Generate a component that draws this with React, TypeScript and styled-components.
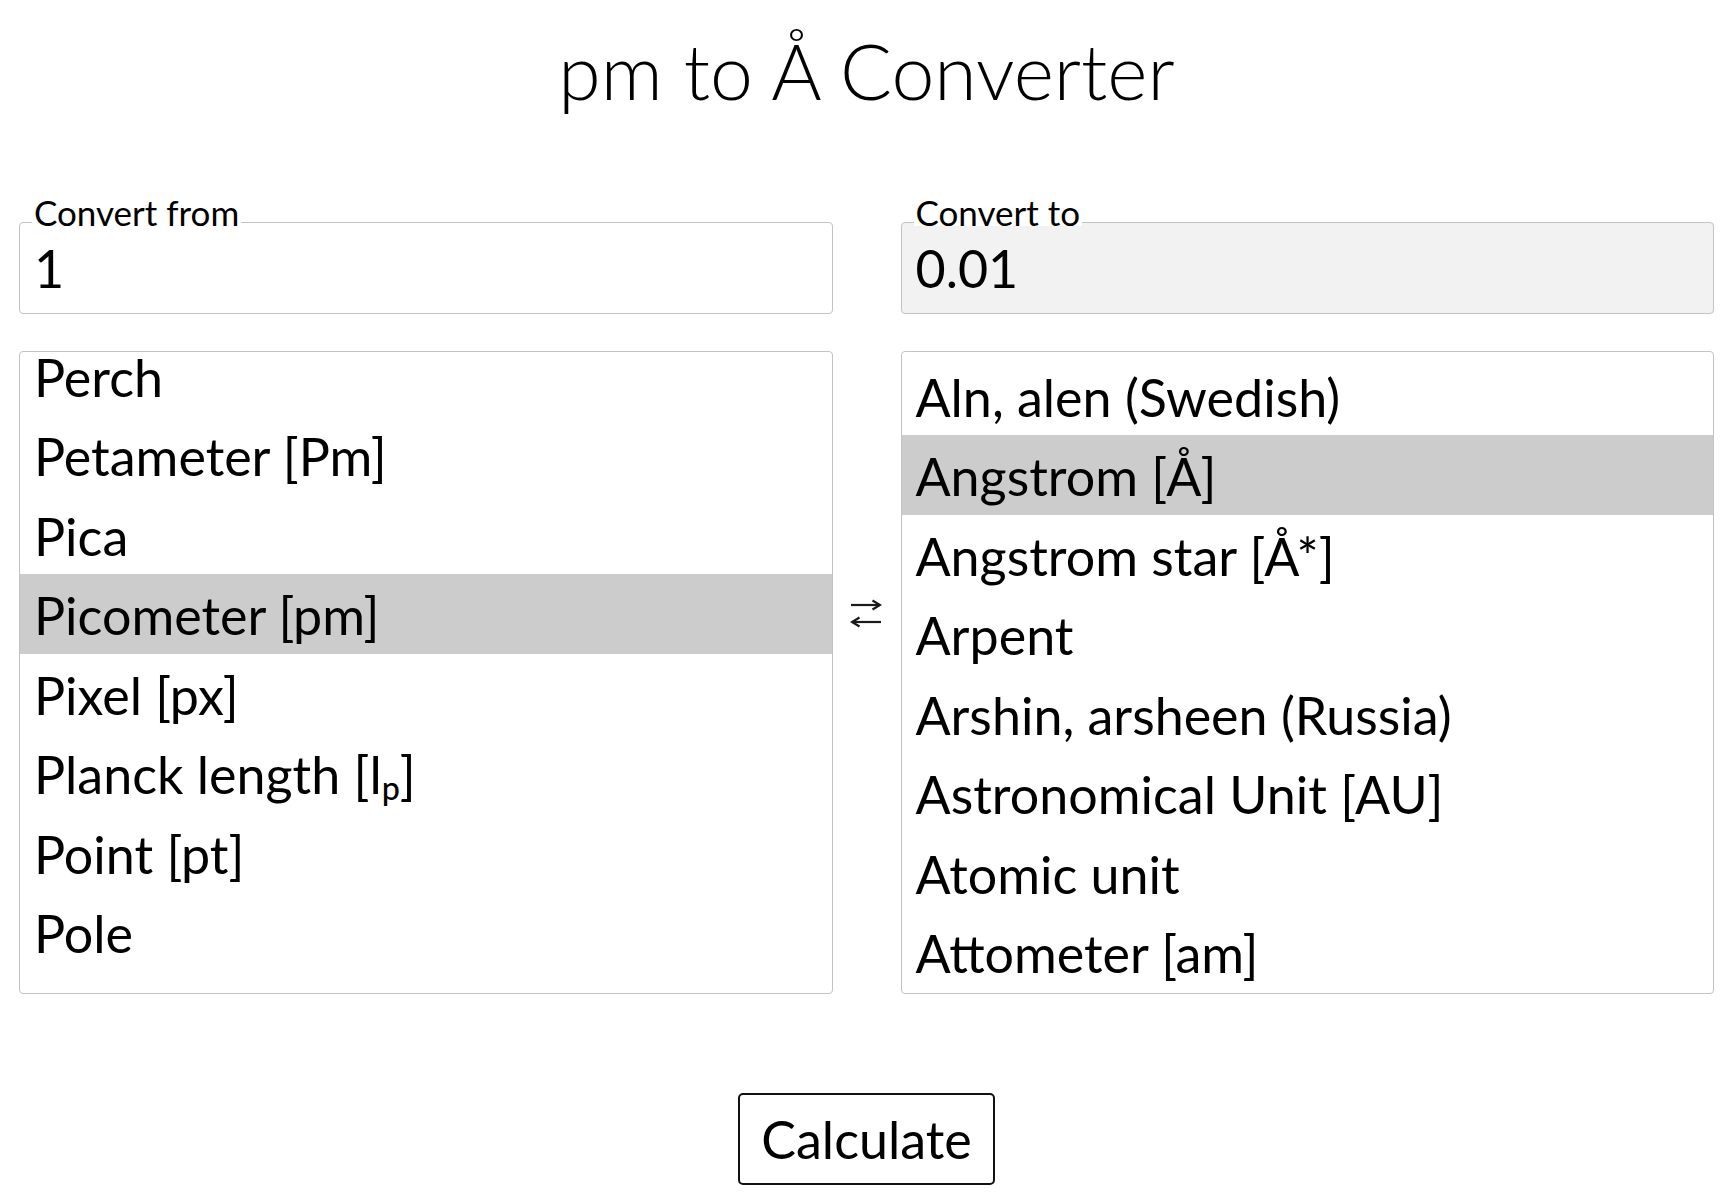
import React, { useLayoutEffect, useRef, useState } from "react";
import styled, { createGlobalStyle } from "styled-components";

const FONT = `Lato, "Noto Sans", "DejaVu Sans", sans-serif`;

const GlobalStyle = createGlobalStyle`
  html, body {
    margin: 0;
    padding: 0;
    background: #ffffff;
  }
  body {
    font-family: ${FONT};
    color: #000000;
  }
  *, *::before, *::after {
    box-sizing: border-box;
  }
`;

type Unit = { id: string; label: React.ReactNode; meters: number };

const Subscript = styled.sub`
  font-size: 0.62em;
  font-weight: 500;
  line-height: 0;
  vertical-align: -0.18em;
`;

const FROM_UNITS: Unit[] = [
  { id: "perch", label: "Perch", meters: 5.0292 },
  { id: "petameter", label: "Petameter [Pm]", meters: 1e15 },
  { id: "pica", label: "Pica", meters: 0.00423333 },
  { id: "picometer", label: "Picometer [pm]", meters: 1e-12 },
  { id: "pixel", label: "Pixel [px]", meters: 0.000264583 },
  {
    id: "planck",
    label: (
      <>
        Planck length [l<Subscript>p</Subscript>]
      </>
    ),
    meters: 1.61605e-35,
  },
  { id: "point", label: "Point [pt]", meters: 0.000352778 },
  { id: "pole", label: "Pole", meters: 5.0292 },
  { id: "quarter", label: "Quarter", meters: 0.2286 },
];

const TO_UNITS: Unit[] = [
  { id: "aln", label: "Aln, alen (Swedish)", meters: 0.5937777778 },
  { id: "angstrom", label: "Angstrom [Å]", meters: 1e-10 },
  { id: "angstrom-star", label: "Angstrom star [Å*]", meters: 1.00001495e-10 },
  { id: "arpent", label: "Arpent", meters: 58.5216 },
  { id: "arshin", label: "Arshin, arsheen (Russia)", meters: 0.7112 },
  { id: "au", label: "Astronomical Unit [AU]", meters: 149597870691 },
  { id: "atomic-unit", label: "Atomic unit", meters: 5.29177e-11 },
  { id: "attometer", label: "Attometer [am]", meters: 1e-18 },
];

const ROW_HEIGHT = 79.5;
const TEXT_SIZE = 52;

const Page = styled.main`
  display: flex;
  flex-direction: column;
  padding: 22px 20px 40px 19px;
`;

const Title = styled.h1`
  margin: 0;
  text-align: center;
  font-weight: 300;
  font-size: 77px;
  line-height: 96px;
  color: #000;
`;

const Converter = styled.div`
  display: grid;
  grid-template-columns: 1fr 68px 1fr;
  grid-template-rows: 92px 643px;
  row-gap: 37px;
  margin-top: 104px;
`;

const Field = styled.div<{ $readOnly?: boolean }>`
  position: relative;
  border: 1px solid #c3c3c3;
  border-radius: 4px;
  background: ${(p) => (p.$readOnly ? "#f2f2f2" : "#ffffff")};
`;

const FieldLabel = styled.label`
  position: absolute;
  left: 12px;
  top: -24px;
  padding: 0 2px;
  background: #ffffff;
  font-size: 35px;
  line-height: 27px;
  white-space: nowrap;
`;

const ValueInput = styled.input`
  display: block;
  width: 100%;
  height: 100%;
  border: 0;
  margin: 0;
  padding: 0 14px;
  background: transparent;
  font-family: ${FONT};
  font-size: ${TEXT_SIZE}px;
  color: #000;
  outline: none;
`;

const SwapCell = styled.div`
  grid-column: 2;
  grid-row: 1 / span 2;
  align-self: center;
  justify-self: center;
  padding-top: 12px;
  display: flex;
`;

const SwapButton = styled.button`
  border: 0;
  padding: 0;
  margin: 0 0 0 -2px;
  background: transparent;
  cursor: pointer;
  display: flex;
`;

const ListBox = styled.div`
  border: 1px solid #c3c3c3;
  border-radius: 4px;
  overflow: hidden;
  padding: 3.5px 0 1.5px;
  background: #fff;
`;

const Option = styled.div<{ $selected?: boolean }>`
  height: ${ROW_HEIGHT}px;
  line-height: ${ROW_HEIGHT}px;
  padding: 2px 14px 0;
  font-size: ${TEXT_SIZE}px;
  white-space: nowrap;
  cursor: default;
  background: ${(p) => (p.$selected ? "#cccccc" : "transparent")};
`;

const Actions = styled.div`
  display: flex;
  justify-content: center;
  margin-top: 99px;
`;

const CalcButton = styled.button`
  height: 92px;
  padding: 0 21px;
  border: 2px solid #111;
  border-radius: 5px;
  background: #ffffff;
  font-family: ${FONT};
  font-size: ${TEXT_SIZE}px;
  color: #000;
  cursor: pointer;
`;

function SwapIcon() {
  return (
    <svg width="32" height="30" viewBox="0 0 32 30" fill="none" stroke="#1a1a1a" strokeWidth="2.2">
      <line x1="1" y1="6" x2="30" y2="6" />
      <polyline points="22.5,1.5 30,6 22.5,10.5" strokeLinejoin="miter" />
      <line x1="2" y1="23" x2="31" y2="23" />
      <polyline points="9.5,18.5 2,23 9.5,27.5" strokeLinejoin="miter" />
    </svg>
  );
}

type ListProps = {
  units: Unit[];
  selected: string;
  onSelect: (id: string) => void;
  scrollTop?: number;
};

function UnitList({ units, selected, onSelect, scrollTop = 0 }: ListProps) {
  const ref = useRef<HTMLDivElement>(null);
  useLayoutEffect(() => {
    if (ref.current) ref.current.scrollTop = scrollTop;
  }, [scrollTop]);
  return (
    <ListBox ref={ref} role="listbox">
      {units.map((u) => (
        <Option
          key={u.id}
          role="option"
          aria-selected={u.id === selected}
          $selected={u.id === selected}
          onClick={() => onSelect(u.id)}
        >
          {u.label}
        </Option>
      ))}
    </ListBox>
  );
}

function formatResult(n: number): string {
  if (!isFinite(n)) return "";
  return String(Number(n.toPrecision(12)));
}

export default function App() {
  const [value, setValue] = useState("1");
  const [from, setFrom] = useState("picometer");
  const [to, setTo] = useState("angstrom");
  const [result, setResult] = useState("0.01");

  const all = [...FROM_UNITS, ...TO_UNITS];

  const calculate = () => {
    const f = all.find((u) => u.id === from);
    const t = all.find((u) => u.id === to);
    const v = parseFloat(value);
    if (!f || !t || isNaN(v)) {
      setResult("");
      return;
    }
    setResult(formatResult((v * f.meters) / t.meters));
  };

  return (
    <>
      <GlobalStyle />
      <Page>
        <Title>pm to Å Converter</Title>
        <Converter>
          <Field>
            <FieldLabel htmlFor="from-value">Convert from</FieldLabel>
            <ValueInput id="from-value" value={value} onChange={(e) => setValue(e.target.value)} />
          </Field>
          <SwapCell>
            <SwapButton type="button" aria-label="Swap units">
              <SwapIcon />
            </SwapButton>
          </SwapCell>
          <Field $readOnly>
            <FieldLabel htmlFor="to-value">Convert to</FieldLabel>
            <ValueInput id="to-value" value={result} readOnly />
          </Field>
          <UnitList units={FROM_UNITS} selected={from} onSelect={setFrom} scrollTop={20} />
          <UnitList units={TO_UNITS} selected={to} onSelect={setTo} />
        </Converter>
        <Actions>
          <CalcButton type="button" onClick={calculate}>
            Calculate
          </CalcButton>
        </Actions>
      </Page>
    </>
  );
}
